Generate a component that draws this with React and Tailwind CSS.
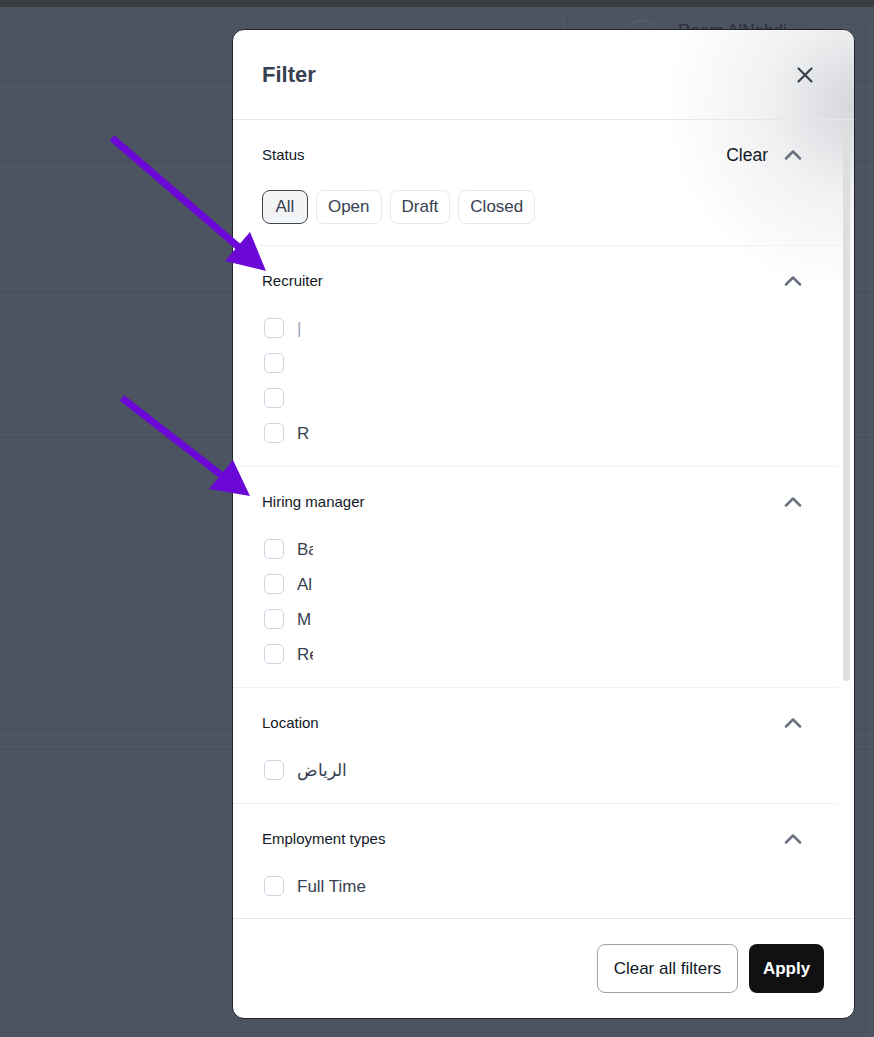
import React from 'react';
import { X, ChevronUp } from 'lucide-react';

const font = { fontFamily: '"Liberation Sans", Arial, "Noto Sans", sans-serif' };

const Check = ({ label, clip = true, muted = false }) => (
  <div className="flex items-center h-[24px] gap-[13px] pl-[2px]">
    <span className="w-[20px] h-[20px] rounded-[5px] border border-[#cbd5e1] bg-white shrink-0" />
    <span
      className={`text-[17px] whitespace-nowrap leading-none ${clip ? 'max-w-[16px] overflow-hidden' : ''} ${
        muted ? 'text-[#9ca3af] font-light' : 'text-[#374151]'
      }`}
    >
      {label}
    </span>
  </div>
);

const Section = ({ title, right, children, last = false }) => (
  <div className={`pl-[29px] pr-[31px] pt-6 ${last ? 'pb-[21px]' : 'pb-[21px] border-b border-[#f0f0f3]'}`}>
    <div className="flex items-center h-[22px]">
      <span className="text-[15px] text-[#111827]">{title}</span>
      <div className="ml-auto flex items-center gap-[11px]">
        {right}
        <ChevronUp size={28} strokeWidth={2.2} className="text-[#6b7280]" />
      </div>
    </div>
    <div className="mt-6">{children}</div>
  </div>
);

const Pill = ({ label, active }) => (
  <button
    className={`h-[34px] rounded-lg text-[17px] text-[#374151] ${
      active ? 'px-[12.5px] bg-[#f3f4f6] border border-[#3f4652]' : 'px-[11px] bg-white border border-[#e5e7eb]'
    }`}
  >
    {label}
  </button>
);

export default function App() {
  return (
    <div className="relative w-[874px] h-[1037px] overflow-hidden bg-[#4c5361]" style={font}>
      {/* page behind the overlay */}
      <div className="h-[7px] bg-[#3c3d3f]" />
      <div className="relative h-[75px] border-b border-[#454b57]">
        <div className="absolute left-[567px] top-[11px] h-[64px] w-px bg-[#454b57]" />
        <div className="absolute left-[622px] top-[13px] w-[40px] h-[40px] rounded-full border border-[#5c6370]" />
        <div className="absolute left-[678px] top-[11px] text-[17px] text-[#2a2f38]">Reem AlNahdi</div>
      </div>
      <div className="h-[80px] border-b border-[#454b57]" />
      <div className="h-[130px] border-b border-[#454b57]" />
      <div className="h-[146px] border-b border-[#454b57]" />
      <div className="h-[292px] border-b border-[#454b57]" />
      <div className="h-[20px] border-b border-[#454b57]" />
      <div className="absolute right-[3px] top-[20px] bottom-0 w-px bg-[#545b68]" />

      {/* modal */}
      <div className="absolute left-[232px] top-[29px] w-[623px] h-[990px] bg-white rounded-xl border border-[#1f232b] overflow-hidden flex flex-col">
        <div className="pointer-events-none absolute right-0 top-0 w-[250px] h-[250px] bg-[radial-gradient(circle_at_100%_30%,rgba(208,210,214,0.9)_0%,rgba(228,229,232,0.55)_28%,rgba(255,255,255,0)_62%)]" />

        <div className="relative h-[90px] shrink-0 border-b border-[#e5e7eb] flex items-center pl-[29px] pr-[36px]">
          <h2 className="text-[22px] font-bold text-[#374151]">Filter</h2>
          <X size={26} strokeWidth={2} className="ml-auto text-[#374151]" />
        </div>

        <div className="relative flex-1 flex min-h-0">
          <div className="flex-1 min-w-0">
            <Section title="Status" right={<span className="text-[17.5px] text-[#111827]">Clear</span>}>
              <div className="flex gap-2">
                <Pill label="All" active />
                <Pill label="Open" />
                <Pill label="Draft" />
                <Pill label="Closed" />
              </div>
            </Section>

            <Section title="Recruiter">
              <div className="flex flex-col gap-[11px]">
                <Check label="|" muted />
                <Check label="" />
                <Check label="" />
                <Check label="R" />
              </div>
            </Section>

            <Section title="Hiring manager">
              <div className="flex flex-col gap-[11px]">
                <Check label="Ba" />
                <Check label="Al" />
                <Check label="M" />
                <Check label="Re" />
              </div>
            </Section>

            <Section title="Location">
              <Check label="الرياض" clip={false} />
            </Section>

            <Section title="Employment types" last>
              <Check label="Full Time" clip={false} />
            </Section>
          </div>
          <div className="w-[16px] shrink-0 pt-[5px] pl-[5px]">
            <div className="w-[7px] h-[556px] rounded-full bg-[#dedede]" />
          </div>
        </div>

        <div className="h-[100px] shrink-0 border-t border-[#e5e7eb] flex items-center justify-end gap-[11px] pr-[30px]">
          <button className="h-[49px] w-[141px] rounded-lg border border-[#a1a1aa] bg-white text-[17px] text-[#111827]">
            Clear all filters
          </button>
          <button className="h-[49px] w-[75px] rounded-lg bg-[#111114] text-[17px] font-semibold text-white">
            Apply
          </button>
        </div>
      </div>

      {/* annotation arrows */}
      <svg className="pointer-events-none absolute inset-0" width="874" height="1037" viewBox="0 0 874 1037">
        <line x1="112" y1="138" x2="242" y2="250" stroke="#6b08d8" strokeWidth="7" />
        <polygon points="266,271 225,261 250,232" fill="#6b08d8" />
        <line x1="122" y1="398" x2="225" y2="478" stroke="#6b08d8" strokeWidth="7" />
        <polygon points="250,496 209,489 233,460" fill="#6b08d8" />
      </svg>
    </div>
  );
}
